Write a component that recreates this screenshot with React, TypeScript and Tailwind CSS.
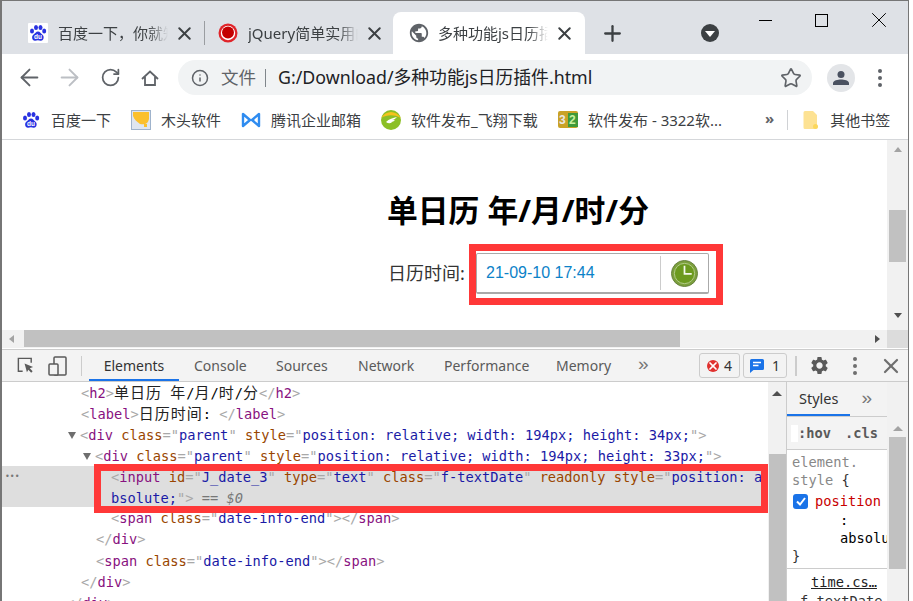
import { ArrowLeft, ArrowRight, RotateCw, Info, Star, X, Plus } from "lucide-react";
import { MdPublic, MdSettings } from "react-icons/md";
import type { ReactNode } from "react";

const SANS = "font-['Noto_Sans','Noto_Sans_CJK_SC',sans-serif]";
const MONO = "font-['DejaVu_Sans_Mono','Noto_Sans_CJK_SC',monospace]";

function BaiduIcon({ tile = false }: { tile?: boolean }) {
  return (
    <svg viewBox="0 0 20 20" className="w-[20px] h-[20px] shrink-0">
      {tile && <rect width="20" height="20" rx="1" fill="#fff" />}
      <g fill="#2932e1">
        <ellipse cx="4" cy="8" rx="2" ry="2.5" />
        <ellipse cx="8" cy="4.5" rx="2" ry="2.5" />
        <ellipse cx="12.5" cy="4.5" rx="2" ry="2.5" />
        <ellipse cx="16.2" cy="8" rx="2" ry="2.5" />
        <path d="M10 8.500c2 0 3 2 4.500 3.300 2 1.700 1.400 5.700-1.600 5.900-1 .1-2-.4-3-.4s-2 .5-3 .4c-3-.2-3.600-4.200-1.600-5.900C7 10.500 8 8.500 10 8.500z" />
      </g>
      <text x="10" y="16.300" textAnchor="middle" fontSize="6.500" fontWeight="700" fill="#fff" fontFamily="Liberation Sans">du</text>
    </svg>
  );
}

function JqueryIcon() {
  return (
    <svg viewBox="0 0 20 20" className="w-[20px] h-[20px] shrink-0">
      <circle cx="10" cy="10" r="9.500" fill="#e0242a" />
      <circle cx="10" cy="10" r="7.200" fill="#fff" />
      <circle cx="10" cy="9.500" r="6" fill="#c40000" />
    </svg>
  );
}

function Tab({ icon, title, active = false }: { icon: ReactNode; title: string; active?: boolean }) {
  return (
    <div className={`flex items-center h-[42px] ${active ? "w-[192px] bg-white rounded-t-[8px] pl-[15px]" : "w-[176px]"}`}>
      {icon}
      <span className={`ml-[10px] w-[110px] whitespace-nowrap overflow-hidden text-[15px] text-[#3c4043] [mask-image:linear-gradient(to_right,black_82%,transparent)] ${SANS}`}>{title}</span>
      <X size={21} strokeWidth={2.300} className="ml-[6px] text-[#3c4043] shrink-0" />
    </div>
  );
}

function Bookmark({ icon, label, className }: { icon: ReactNode; label: string; className: string }) {
  return (
    <div className={`flex items-center gap-[10px] shrink-0 ${className}`}>
      {icon}
      <span className={`text-[15px] text-[#3c4043] whitespace-nowrap ${SANS}`}>{label}</span>
    </div>
  );
}

function DevTab({ label, className }: { label: string; className: string }) {
  return <span className={`text-[14px] text-[#5a5a5a] ${SANS} ${className}`}>{label}</span>;
}

function Tag({ children }: { children: ReactNode }) {
  return <span className="text-[#881280]">{children}</span>;
}
function Pun({ children }: { children: ReactNode }) {
  return <span className="text-[#a8a8a8]">{children}</span>;
}
function Cjk({ children }: { children: ReactNode }) {
  return <span className="text-[15px] tracking-[1px] text-[#222]">{children}</span>;
}
function Attr({ name, value }: { name: string; value: string }) {
  return (
    <>
      {" "}
      <span className="text-[#994500]">{name}</span>
      <Pun>="</Pun>
      <span className="text-[#1a1aa6]">{value}</span>
      <Pun>"</Pun>
    </>
  );
}

function Line({ indent, arrow = false, children }: { indent: string; arrow?: boolean; children: ReactNode }) {
  return (
    <div className={`h-[21.100px] leading-[21.100px] whitespace-pre flex items-center ${indent}`}>
      {arrow && <span className="w-0 h-0 -ml-[13px] mr-[4px] mt-[1px] border-l-[4.500px] border-r-[4.500px] border-t-[7px] border-l-transparent border-r-transparent border-t-[#6e6e6e]" />}
      <span className="mt-[2px]">{children}</span>
    </div>
  );
}

export default function App() {
  return (
    <div className="relative w-[913px] h-[601px] overflow-hidden bg-white">
      <div className="w-[909px] h-[601px] flex flex-col border-l-[2px] border-l-[#767676] border-r border-r-[#767676] border-t border-t-[#767676] bg-white">
        {/* tab strip */}
        <div className="h-[53px] shrink-0 bg-[#dee1e6] flex items-end pl-[26px]">
          <Tab title="百度一下，你就知道" icon={<BaiduIcon tile />} />
          <span className="w-px h-[24px] bg-[#9a9da1] mb-[9px]" />
          <div className="w-[188px] pl-[13px]">
            <Tab title="jQuery简单实用的" icon={<JqueryIcon />} />
          </div>
          <Tab active title="多种功能js日历插件" icon={<MdPublic size={22} className="-mr-[2px] text-[#5f6368] shrink-0" />} />
          <div className="h-[42px] flex items-center">
            <Plus size={25} strokeWidth={2.200} className="ml-[15px] text-[#3c4043]" />
            <span className="ml-[76px] w-[18px] h-[18px] rounded-full bg-[#3c4043] flex items-center justify-center">
              <span className="w-0 h-0 mt-[2px] border-l-[5px] border-r-[5px] border-t-[6px] border-l-transparent border-r-transparent border-t-white" />
            </span>
          </div>
          <div className="self-start flex items-center ml-[40px] mt-[6px]">
            <span className="w-[13px] h-px bg-black" />
            <span className="ml-[43px] w-[13px] h-[13px] border border-black" />
            <X size={26} strokeWidth={0.900} className="ml-[38px] text-black" />
          </div>
        </div>

        {/* toolbar */}
        <div className="h-[47px] shrink-0 flex items-center pl-[14px] bg-white">
          <ArrowLeft size={27} strokeWidth={1.700} className="text-[#5f6368] shrink-0" />
          <ArrowRight size={27} strokeWidth={1.700} className="ml-[13px] text-[#bcbfc4] shrink-0" />
          <RotateCw size={21} strokeWidth={2} className="ml-[17px] text-[#5f6368] shrink-0" />
          <svg viewBox="0 0 18 18" className="ml-[20px] w-[18px] h-[18px] shrink-0" fill="none" stroke="#5f6368" strokeWidth="1.800">
            <path d="M1 10 9 2.500l8 7.500M4 8v8h10V8" />
          </svg>
          <div className="ml-[19px] w-[634px] h-[35px] shrink-0 rounded-full bg-[#f1f3f4] flex items-center pl-[13px] pr-[10px]">
            <Info size={18} strokeWidth={2} className="text-[#5f6368]" />
            <span className={`ml-[12px] text-[17.500px] text-[#5f6368] ${SANS}`}>文件</span>
            <span className="ml-[9px] w-px h-[18px] bg-[#80868b]" />
            <span className={`ml-[12px] text-[17.800px] text-[#202124] whitespace-nowrap ${SANS}`}>G:/Download/多种功能js日历插件.html</span>
            <Star size={22} strokeWidth={1.800} className="ml-auto text-[#5f6368]" />
          </div>
          <span className="ml-[15px] w-[28px] h-[28px] shrink-0 rounded-full bg-[#e3e5e8] flex items-center justify-center">
            <svg viewBox="0 0 16 16" className="w-[16px] h-[16px]" fill="#4a5160">
              <circle cx="8" cy="4.500" r="3.500" />
              <path d="M0 15v-2c0-2.500 5-3.500 8-3.500s8 1 8 3.500v2z" />
            </svg>
          </span>
          <span className="ml-[23px] flex flex-col gap-[3px]">
            <span className="w-[4px] h-[4px] rounded-full bg-[#5f6368]" />
            <span className="w-[4px] h-[4px] rounded-full bg-[#5f6368]" />
            <span className="w-[4px] h-[4px] rounded-full bg-[#5f6368]" />
          </span>
        </div>

        {/* bookmarks */}
        <div className="h-[39px] shrink-0 flex items-center border-b border-b-[#d5d7da] pl-[19px]">
          <Bookmark className="w-[110px]" label="百度一下" icon={<BaiduIcon />} />
          <Bookmark
            className="w-[110px]"
            label="木头软件"
            icon={
              <svg viewBox="0 0 20 20" className="w-[20px] h-[20px]">
                <rect x=".5" y=".5" width="19" height="19" fill="#dfe6f0" stroke="#9fb3cc" />
                <path d="M2 2h16v7c-1 5-5 6-9 5C6 12 3 9 2 6z" fill="#fbc02d" />
                <rect x="13" y="14" width="3" height="3" fill="#fbc02d" />
              </svg>
            }
          />
          <Bookmark
            className="w-[140px]"
            label="腾讯企业邮箱"
            icon={
              <svg viewBox="0 0 20 20" className="w-[20px] h-[20px]" fill="none" stroke="#2f8cf0" strokeWidth="2.400">
                <path d="M2 4v12l7-6zM18 4v12l-7-6z" strokeLinejoin="round" />
              </svg>
            }
          />
          <Bookmark
            className="w-[177px]"
            label="软件发布_飞翔下载"
            icon={
              <svg viewBox="0 0 20 20" className="w-[20px] h-[20px]">
                <circle cx="10" cy="10" r="10" fill="#8cbf26" />
                <path d="M0 8C5 0 15 0 20 8 12 4 6 5 0 8z" fill="#f5c21b" />
                <path d="M5 12c3-3 7-4 11-5-2 2-3 3-5 3 1 0 2 0 3 .5-2 1-3 1.500-5 1.500 1 0 1.500 0 2 .5-2 1-4 1-6-.5z" fill="#fff" />
              </svg>
            }
          />
          <Bookmark
            className="w-[207px]"
            label="软件发布 - 3322软..."
            icon={
              <svg viewBox="0 0 20 20" className="w-[20px] h-[20px]">
                <rect y="1" width="20" height="17" rx="2" fill="#c9a227" />
                <rect x="10" y="3" width="10" height="14" fill="#3f9a3a" />
                <text x="1" y="14" fontSize="12" fontWeight="700" fill="#e8e8e8" fontFamily="Liberation Sans">3</text>
                <text x="11" y="14" fontSize="12" fontWeight="700" fill="#c7f0a0" fontFamily="Liberation Sans">2</text>
              </svg>
            }
          />
          <span className={`text-[15px] font-bold text-[#5f6368] leading-none -mt-[4px] ${SANS}`}>»</span>
          <span className="ml-[13px] w-px h-[20px] bg-[#d0d2d5]" />
          <span className="ml-[15px] flex items-center gap-[12px]">
            <svg viewBox="0 0 14 18" className="w-[15px] h-[18px]">
              <path d="M1.500 0h8l4 4v12.500a1.500 1.500 0 0 1-1.500 1.500H1.500A1.500 1.500 0 0 1 0 16.500V1.500A1.500 1.500 0 0 1 1.500 0z" fill="#fde293" />
              <circle cx="12" cy="15.500" r="2.500" fill="#fbd75b" />
            </svg>
            <span className={`text-[15px] text-[#3c4043] whitespace-nowrap ${SANS}`}>其他书签</span>
          </span>
        </div>

        {/* page */}
        <div className="h-[190px] shrink-0 flex">
          <div className={`w-[885px] pl-[385px] pt-[50px] ${SANS}`}>
            <h2 className="text-[30.800px] leading-[40px] font-bold text-black whitespace-nowrap">单日历 年/月/时/分</h2>
            <div className="flex items-center mt-[23px] ml-px h-[41px]">
              <span className="w-[88px] text-[18px] text-[#333] whitespace-nowrap">日历时间:</span>
              <div className="w-[233px] h-[41px] rounded-[2px] border border-[#aaa] border-b-[2px] flex items-center bg-white">
                <span className="ml-[9px] w-[174px] text-[16px] text-[#0c82c8] font-['Liberation_Sans',sans-serif]">21-09-10 17:44</span>
                <span className="w-px h-[34px] bg-[#ccc]" />
                <svg viewBox="0 0 28 28" className="ml-[10px] w-[27px] h-[27px]">
                  <circle cx="14" cy="14" r="13.500" fill="#7b9f3c" stroke="#667f3e" />
                  <circle cx="14" cy="14" r="10.500" fill="#6c9a1f" stroke="#b4cc8c" />
                  <path d="M14 6v8.500h7.500" fill="none" stroke="#f4f8ec" strokeWidth="1.800" />
                </svg>
              </div>
            </div>
          </div>
          <div className="w-[21px] bg-[#f1f1f1] flex flex-col items-center pt-[7px]">
            <span className="w-0 h-0 border-l-[4px] border-r-[4px] border-b-[5px] border-l-transparent border-r-transparent border-b-[#a3a3a3]" />
            <span className="mt-[58px] w-[17px] h-[52px] bg-[#c1c1c1]" />
            <span className="mt-[51px] w-0 h-0 border-l-[4px] border-r-[4px] border-t-[5px] border-l-transparent border-r-transparent border-t-[#505050]" />
          </div>
        </div>

        {/* horizontal scrollbar */}
        <div className="h-[18px] shrink-0 flex items-center bg-[#f1f1f1]">
          <span className="ml-[7px] w-0 h-0 border-t-[4.500px] border-b-[4.500px] border-r-[5px] border-t-transparent border-b-transparent border-r-[#a3a3a3]" />
          <span className="ml-[10px] w-[656px] h-[17px] mb-px bg-[#c1c1c1]" />
          <span className="ml-[195px] w-0 h-0 border-t-[4.500px] border-b-[4.500px] border-l-[5px] border-t-transparent border-b-transparent border-l-[#505050]" />
          <span className="ml-auto w-[21px] h-[18px] bg-[#dcdcdc]" />
        </div>
        <div className="h-px shrink-0 bg-white" />

        {/* devtools toolbar */}
        <div className="h-[33px] shrink-0 flex items-center border-t border-t-[#ccc] border-b border-b-[#ccc] bg-[#f3f3f3]">
          <svg viewBox="0 0 20 20" className="ml-[14px] w-[19px] h-[19px]" fill="none" stroke="#5a5a5a" strokeWidth="1.500">
            <path d="M7 16H2.500V2.500H16V7" />
            <path d="M9 8l9 3.500-3.500 1.500 3 3-1.500 1.500-3-3L11.500 17z" fill="#5a5a5a" stroke="none" />
          </svg>
          <svg viewBox="0 0 20 20" className="ml-[13px] w-[20px] h-[20px]" fill="none" stroke="#5a5a5a" strokeWidth="1.500">
            <rect x="6" y="1" width="12" height="18" rx="1" />
            <rect x="1" y="8" width="9" height="11" rx="1" fill="#f3f3f3" />
          </svg>
          <span className="ml-[13px] w-px h-[20px] bg-[#ccc]" />
          <div className="relative ml-[7px] w-[90px] h-[31px] flex items-center justify-center">
            <DevTab label="Elements" className="text-[#333]" />
            <span className="absolute left-0 right-0 bottom-0 h-[2px] bg-[#1a73e8]" />
          </div>
          <DevTab label="Console" className="ml-[15px] w-[82px]" />
          <DevTab label="Sources" className="w-[82px]" />
          <DevTab label="Network" className="w-[86px]" />
          <DevTab label="Performance" className="w-[112px]" />
          <DevTab label="Memory" className="w-[82px]" />
          <span className="w-[61px] text-[19px] leading-none -mt-[4px] text-[#777] font-['Liberation_Sans',sans-serif]">»</span>
          <div className={`h-[25px] w-[41px] rounded-[3px] border border-[#ccc] flex items-center justify-center gap-[5px] text-[14px] text-[#333] ${SANS}`}>
            <span className="w-[12px] h-[12px] rounded-full bg-[#e0312f] flex items-center justify-center">
              <X size={12} strokeWidth={3.500} className="text-white" />
            </span>
            4
          </div>
          <div className={`ml-[3px] h-[25px] w-[44px] rounded-[3px] border border-[#ccc] flex items-center justify-center gap-[8px] text-[14px] text-[#333] ${SANS}`}>
            <svg viewBox="0 0 14 14" className="w-[14px] h-[14px]">
              <path d="M1.500 0h11A1.500 1.500 0 0 1 14 1.500v8a1.500 1.500 0 0 1-1.500 1.500H3.500L0 14V1.500A1.500 1.500 0 0 1 1.500 0z" fill="#1a73e8" />
              <path d="M3 3.500h8M3 6.500h5.500" stroke="#fff" strokeWidth="1.300" />
            </svg>
            1
          </div>
          <span className="ml-[8px] w-[2px] h-[20px] bg-[#ccc]" />
          <MdSettings size={21} className="ml-[12px] text-[#5a5a5a] shrink-0" />
          <span className="ml-[23px] flex flex-col gap-[3px]">
            <span className="w-[4px] h-[4px] rounded-full bg-[#6e6e6e]" />
            <span className="w-[4px] h-[4px] rounded-full bg-[#6e6e6e]" />
            <span className="w-[4px] h-[4px] rounded-full bg-[#6e6e6e]" />
          </span>
          <X size={24} strokeWidth={2.200} className="ml-[22px] text-[#6e6e6e] shrink-0" />
        </div>

        {/* devtools body */}
        <div className={`flex-1 min-h-0 flex text-[13.700px] ${MONO}`}>
          <div className="w-[766px] shrink-0 overflow-hidden">
            <Line indent="pl-[79px]"><Pun>&lt;</Pun><Tag>h2</Tag><Pun>&gt;</Pun><Cjk>单日历</Cjk> <Cjk>年</Cjk>/<Cjk>月</Cjk>/<Cjk>时</Cjk>/<Cjk>分</Cjk><Pun>&lt;/</Pun><Tag>h2</Tag><Pun>&gt;</Pun></Line>
            <Line indent="pl-[79px]"><Pun>&lt;</Pun><Tag>label</Tag><Pun>&gt;</Pun><Cjk>日历时间</Cjk>: <Pun>&lt;/</Pun><Tag>label</Tag><Pun>&gt;</Pun></Line>
            <Line indent="pl-[79px]" arrow><Pun>&lt;</Pun><Tag>div</Tag><Attr name="class" value="parent" /><Attr name="style" value="position: relative; width: 194px; height: 34px;" /><Pun>&gt;</Pun></Line>
            <Line indent="pl-[94px]" arrow><Pun>&lt;</Pun><Tag>div</Tag><Attr name="class" value="parent" /><Attr name="style" value="position: relative; width: 194px; height: 33px;" /><Pun>&gt;</Pun></Line>
            <div className="relative h-[41px] bg-[#dedede]">
              <span className="absolute left-[3px] top-0 text-[8px] leading-[21px] text-[#777]">•••</span>
              <Line indent="pl-[109px]"><Pun>&lt;</Pun><Tag>input</Tag><Attr name="id" value="J_date_3" /><Attr name="type" value="text" /><Attr name="class" value="f-textDate" /> <span className="text-[#994500]">readonly</span><Attr name="style" value="position: a" /></Line>
              <Line indent="pl-[109px]"><span className="text-[#1a1aa6]">bsolute;</span><Pun>"&gt;</Pun><span className="text-[#777]"> == <i>$0</i></span></Line>
            </div>
            <Line indent="pl-[109px]"><Pun>&lt;</Pun><Tag>span</Tag><Attr name="class" value="date-info-end" /><Pun>&gt;&lt;/</Pun><Tag>span</Tag><Pun>&gt;</Pun></Line>
            <Line indent="pl-[94px]"><Pun>&lt;/</Pun><Tag>div</Tag><Pun>&gt;</Pun></Line>
            <Line indent="pl-[94px]"><Pun>&lt;</Pun><Tag>span</Tag><Attr name="class" value="date-info-end" /><Pun>&gt;&lt;/</Pun><Tag>span</Tag><Pun>&gt;</Pun></Line>
            <Line indent="pl-[79px]"><Pun>&lt;/</Pun><Tag>div</Tag><Pun>&gt;</Pun></Line>
            <Line indent="pl-[64px]"><Pun>&lt;/</Pun><Tag>div</Tag><Pun>&gt;</Pun></Line>
          </div>

          <div className="w-[18px] shrink-0 bg-[#f1f1f1] flex flex-col items-center pt-[9px]">
            <span className="w-0 h-0 border-l-[5px] border-r-[5px] border-b-[5px] border-l-transparent border-r-transparent border-b-[#505050]" />
            <span className="mt-[58px] w-[17px] flex-1 bg-[#c1c1c1]" />
          </div>

          <div className="w-[1px] shrink-0 bg-[#ccc]" />

          <div className="w-[100px] shrink-0 overflow-hidden">
            <div className="relative h-[35px] border-b border-b-[#ccc] bg-[#f3f3f3] flex items-center">
              <span className={`ml-[12px] text-[14.500px] text-[#333] ${SANS}`}>Styles</span>
              <span className="absolute left-0 bottom-0 w-[63px] h-[2px] bg-[#1a73e8]" />
              <span className="ml-[23px] -mt-[4px] text-[19px] leading-none text-[#777] font-['Liberation_Sans',sans-serif]">»</span>
            </div>
            <div className="h-[33px] border-b border-b-[#ccc] bg-[#f3f3f3] flex items-center font-bold text-[#5a5a5a] whitespace-pre">
              <span className="ml-[4px] w-[7px] h-[17px] bg-white" />
              <span>:hov</span>
              <span className="ml-[14px]">.cls</span>
            </div>
            <div className="h-[119px] border-b border-b-[#ccc] pl-[5px] pt-[3px] leading-[18px]">
              <div className="text-[#888]">element.</div>
              <div className="text-[#888]">style <span className="text-[#333]">{"{"}</span></div>
              <div className="flex items-center mt-[3px]">
                <span className="ml-px w-[15px] h-[15px] rounded-[3px] bg-[#1a73e8] flex items-center justify-center">
                  <svg viewBox="0 0 12 12" className="w-[12px] h-[12px]" fill="none" stroke="#fff" strokeWidth="2">
                    <path d="M2 6.500 5 9.500 10 3" />
                  </svg>
                </span>
                <span className="ml-[7px] text-[#c80000]">position</span>
              </div>
              <div className="pl-[48px] mt-[1px]">:</div>
              <div className="pl-[48px] whitespace-nowrap">absolute</div>
              <div className="text-[#333]">{"}"}</div>
            </div>
            <div className="pl-[24px] h-[22px] leading-[26px] underline text-[#222] whitespace-nowrap">time.cs…</div>
            <div className="pl-[13px] leading-[20px] text-[#333] whitespace-nowrap">f-textDate</div>
          </div>

          <div className="flex-1 bg-[#f1f1f1] flex flex-col items-center pt-[9px]">
            <span className="mt-[35px] w-0 h-0 border-l-[5px] border-r-[5px] border-b-[5px] border-l-transparent border-r-transparent border-b-[#a3a3a3]" />
            <span className="mt-[6px] w-[17px] h-[132px] bg-[#c1c1c1]" />
          </div>
        </div>
      </div>

      {/* 截图上的红框标注 */}
      <div className="absolute left-[469px] top-[244px] w-[254px] h-[61px] border-[7px] border-[#ff3838]" />
      <div className="absolute left-[94px] top-[464px] w-[674px] h-[49px] border-[7px] border-[#ff3838]" />
    </div>
  );
}
